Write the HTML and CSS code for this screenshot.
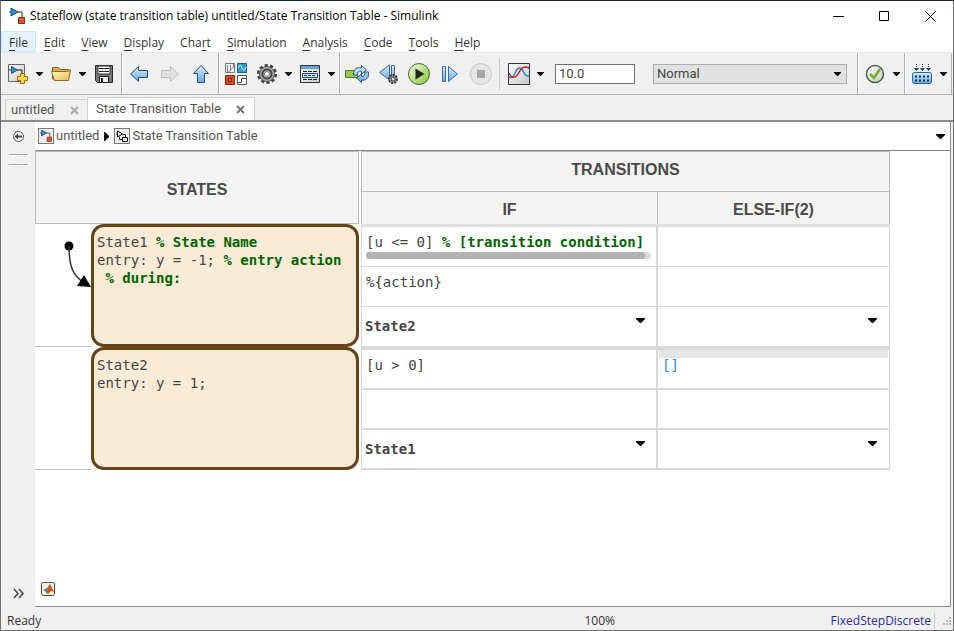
FILE: index.html
```html
<!DOCTYPE html>
<html lang="en">
<head>
	<meta charset="UTF-8">
	<title>Stateflow (state transition table) untitled/State Transition Table - Simulink</title>
	<link rel="stylesheet" href="styles.css">
</head>
<body>

<!-- shared icons -->
<svg class="defs" width="0" height="0" aria-hidden="true">
	<defs>
		<linearGradient id="blue" x1="0" y1="0" x2="0" y2="1"><stop offset="0" stop-color="#dcefff"/><stop offset="1" stop-color="#62a8dc"/></linearGradient>
		<linearGradient id="grey" x1="0" y1="0" x2="1" y2="1"><stop offset="0" stop-color="#fff"/><stop offset="1" stop-color="#c8c8c8"/></linearGradient>
		<linearGradient id="gold" x1="0" y1="0" x2="1" y2="1"><stop offset="0" stop-color="#fffbd0"/><stop offset="1" stop-color="#e8bc45"/></linearGradient>
		<linearGradient id="green" x1="0" y1="0" x2="1" y2="1"><stop offset="0" stop-color="#f4fce4"/><stop offset="1" stop-color="#7cc828"/></linearGradient>
	</defs>
	<symbol id="caret" viewBox="0 0 9 5"><path d="M0 0h9v1L5 5H4L0 1z"/></symbol>
	<symbol id="model" viewBox="0 0 16 16">
		<path d="M0 4h2M8 4h5v5" fill="none" stroke="#333"/>
		<path d="M2 0v8l7-4z" fill="#2f8fd0" stroke="#1c4f7c"/>
		<path d="M9.500 9.500h6v6h-6z" fill="#d9572b" stroke="#8d2b10"/>
	</symbol>
	<symbol id="close" viewBox="0 0 9 9"><path d="M1 1l7 7M8 1L1 8" fill="none" stroke="currentColor" stroke-width="2"/></symbol>
</svg>

<div class="window">
	<header class="titlebar">
		<svg width="16" height="16"><use href="#model"/></svg>
		<h1>Stateflow (state transition table) untitled/State Transition Table - Simulink</h1>
		<div class="controls">
			<button type="button" aria-label="Minimize"><svg width="11" height="11"><path d="M0 5.500h11" stroke="#000"/></svg></button>
			<button type="button" aria-label="Maximize"><svg width="11" height="11"><path d="M.5.5h9v9h-9z" fill="none" stroke="#000"/></svg></button>
			<button type="button" aria-label="Close"><svg width="11" height="11"><path d="M.5.5l10 10M10.500.5l-10 10" stroke="#000"/></svg></button>
		</div>
	</header>

	<nav class="menubar">
		<button type="button" class="active"><u>F</u>ile</button>
		<button type="button"><u>E</u>dit</button>
		<button type="button"><u>V</u>iew</button>
		<button type="button"><u>D</u>isplay</button>
		<button type="button">Cha<u>r</u>t</button>
		<button type="button"><u>S</u>imulation</button>
		<button type="button"><u>A</u>nalysis</button>
		<button type="button"><u>C</u>ode</button>
		<button type="button"><u>T</u>ools</button>
		<button type="button"><u>H</u>elp</button>
	</nav>

	<div class="toolbar">
		<div class="group">
			<button type="button" class="tool" aria-label="New model">
				<svg width="22" height="22" viewBox="0 0 22 22"><path d="M1.500 1.500h16v17h-16z" fill="url(#grey)" stroke="#666"/><path d="M2 7h2M10 7h5v3" fill="none" stroke="#222"/><path d="M4.500 3.500v7l6-3.500z" fill="#2f8fd0" stroke="#1c4f7c"/><path d="M13.500 10.500h4v3h3v4h-3v3h-4v-3h-3v-4h3z" fill="#fbd44a" stroke="#a36b00"/></svg>
			</button>
			<button type="button" class="drop" aria-label="New options"><svg width="7" height="4"><use href="#caret"/></svg></button>
			<button type="button" class="tool" aria-label="Open">
				<svg width="22" height="18" viewBox="0 0 22 18"><path d="M2.500 14V2.500h6l2 2h8V14z" fill="#d9ad4c" stroke="#866020"/><path d="M1.500 6.500h16l3-2-2 11h-14z" fill="url(#gold)" stroke="#946a22"/></svg>
			</button>
			<button type="button" class="drop" aria-label="Open options"><svg width="7" height="4"><use href="#caret"/></svg></button>
			<button type="button" class="tool" aria-label="Save">
				<svg width="20" height="20" viewBox="0 0 20 20"><path d="M1.500 1.500h17v17h-15l-2-2z" fill="#777" stroke="#2b2b2b"/><path d="M4 2h12v8H4z" fill="#fff" stroke="#333"/><path d="M5 4.500h10M5 7.500h10" stroke="#222"/><path d="M5.500 12.500h9v6h-9z" fill="#eee" stroke="#222"/><path d="M7 14h2v4H7z" fill="#222"/></svg>
			</button>
		</div>
		<div class="group">
			<button type="button" class="tool" aria-label="Back">
				<svg width="20" height="18" viewBox="0 0 20 18"><path d="M1.500 9L9.500 1.500v4h9v7h-9v4z" fill="url(#blue)" stroke="#2b4c70"/></svg>
			</button>
			<button type="button" class="tool" aria-label="Forward">
				<svg width="20" height="18" viewBox="0 0 20 18"><path d="M18.500 9L10.500 1.500v4h-9v7h9v4z" fill="#e0e0e0" stroke="#bcbcbc"/></svg>
			</button>
			<button type="button" class="tool" aria-label="Up">
				<svg width="18" height="20" viewBox="0 0 18 20"><path d="M9 1.500L1.500 9.500h4v9h7v-9h4z" fill="url(#blue)" stroke="#2b4c70"/></svg>
			</button>
		</div>
		<div class="group">
			<button type="button" class="tool" aria-label="Library browser">
				<svg width="22" height="22" viewBox="0 0 22 22"><path d="M.5.5h9v9h-9z" fill="#eee" stroke="#777"/><path d="M2.500 9V2M5.500 8V2M8.500 1v3l-5 5" fill="none" stroke="#888"/><path d="M12.500.5h9v9h-9z" fill="#2c9bd6" stroke="#17608c"/><path d="M13 5c2-4 3-3 4 0s3 3 4-1" fill="none" stroke="#fff"/><path d="M.5 12.500h9v9h-9z" fill="#d14a1c" stroke="#8d2b10"/><path d="M3.500 15.500h3v3h-3z" fill="#e87c4e" stroke="#7a1d08"/><path d="M12.500 12.500h9v9h-9z" fill="#fff" stroke="#555"/><path d="M13 19.500h3.500v-4H21" fill="none" stroke="#444"/></svg>
			</button>
			<button type="button" class="tool" aria-label="Configuration parameters">
				<svg width="20" height="20" viewBox="0 0 20 20"><circle cx="10" cy="10" r="8.500" fill="none" stroke="#444" stroke-width="3" stroke-dasharray="3.200 2.140"/><circle cx="10" cy="10" r="7.500" fill="#aaa" stroke="#555"/><circle cx="10" cy="10" r="4.500" fill="#d5d5d5" stroke="#444" stroke-width="2"/><circle cx="10" cy="10" r="2.500" fill="#f5f5f5" stroke="#777"/></svg>
			</button>
			<button type="button" class="drop" aria-label="Configuration options"><svg width="7" height="4"><use href="#caret"/></svg></button>
			<button type="button" class="tool" aria-label="Model explorer">
				<svg width="20" height="18" viewBox="0 0 20 18"><path d="M.5.5h19v17H.5z" fill="url(#grey)" stroke="#333"/><path d="M1 1h18v3H1z" fill="#65a0d6"/><path d="M3 6.500h14M3 14.500h14" stroke="#222" stroke-dasharray="4 1"/><path d="M2.500 8.500h15v4h-15z" fill="#cfe5fa" stroke="#1e4c80"/><path d="M4 10.500h12" stroke="#1e4c80" stroke-dasharray="3 1"/></svg>
			</button>
			<button type="button" class="drop" aria-label="Explorer options"><svg width="7" height="4"><use href="#caret"/></svg></button>
		</div>
		<div class="group grow">
			<button type="button" class="tool" aria-label="Update diagram">
				<svg width="24" height="20" viewBox="0 0 24 20"><path d="M.5 6.500h12v7H.5z" fill="#9bc94a" stroke="#4e7a18"/><path d="M8.500 11c-1-6 4-8 8-7V1.500l5 4.500-5 4V7.500c-3-1-4 1-4 3.500zM23.500 8c1 6-3 9-7 8v2.500L11.500 14l5-4v2.500c3 0 4-2 3-4.500z" fill="url(#blue)" stroke="#2a5884"/></svg>
			</button>
			<button type="button" class="tool" aria-label="Step back">
				<svg width="20" height="22" viewBox="0 0 20 22"><path d="M11.500 2v15L1.500 9.500zM13.500 2.500h3v14h-3z" fill="url(#blue)" stroke="#3b6c9a"/><circle cx="15" cy="16" r="4" fill="#aaa" stroke="#333" stroke-width="2" stroke-dasharray="2 1"/><circle cx="15" cy="16" r="2" fill="#eee" stroke="#333"/></svg>
			</button>
			<button type="button" class="tool" aria-label="Run">
				<svg width="24" height="24" viewBox="0 0 24 24"><circle cx="12" cy="12" r="10.500" fill="url(#green)" stroke="#4b633c"/><path d="M8.500 6.500v11l9-5.500z" fill="#222"/></svg>
			</button>
			<button type="button" class="tool" aria-label="Step forward">
				<svg width="18" height="18" viewBox="0 0 18 18"><path d="M1.500 1.500h3v15h-3zM7.500 1.500v15L16.500 9z" fill="url(#blue)" stroke="#3b6c9a"/></svg>
			</button>
			<button type="button" class="tool" aria-label="Stop" disabled>
				<svg width="24" height="24" viewBox="0 0 24 24"><circle cx="12" cy="12" r="10.500" fill="#e6e6e6" stroke="#c4c4c4"/><path d="M8 8h8v8H8z" fill="#a6a6a6"/></svg>
			</button>
			<span class="divider"></span>
			<button type="button" class="tool" aria-label="Scope">
				<svg width="22" height="22" viewBox="0 0 22 22"><path d="M.5.5h21v21H.5z" fill="url(#grey)" stroke="#333"/><path d="M1 14c4 2 5-2 7-6s5-4 7 0 3 5 6 5" fill="none" stroke="#2d7fc4" stroke-width="1.500"/><path d="M1 10c3 6 7 5 9 1s5-9 11-6" fill="none" stroke="#c7252c" stroke-width="1.500"/></svg>
			</button>
			<button type="button" class="drop" aria-label="Scope options"><svg width="7" height="4"><use href="#caret"/></svg></button>
			<input class="stop-time" type="text" value="10.0" aria-label="Stop time">
			<div class="picker mode">
				<select aria-label="Simulation mode"><option>Normal</option></select>
				<svg width="7" height="4"><use href="#caret"/></svg>
			</div>
		</div>
		<div class="group">
			<button type="button" class="tool" aria-label="Model advisor">
				<svg width="20" height="20" viewBox="0 0 20 20"><circle cx="10" cy="10" r="8.500" fill="url(#grey)" stroke="#4f5f42" stroke-width="1.500"/><path d="M5 10l4 4 6-9" fill="none" stroke="#6fae2a" stroke-width="2.500"/></svg>
			</button>
			<button type="button" class="drop" aria-label="Advisor options"><svg width="7" height="4"><use href="#caret"/></svg></button>
		</div>
		<div class="group">
			<button type="button" class="tool" aria-label="Build">
				<svg width="20" height="20" viewBox="0 0 20 20"><path d="M4.500 0v5M10.500 0v5M16.500 0v5" stroke="#153f6e" stroke-dasharray="1 1"/><path d="M2 4h5L4.500 7zM8 4h5l-2.500 3zM14 4h5l-2.500 3z" fill="#153f6e"/><rect x=".5" y="8.500" width="19" height="11" rx="2" fill="url(#blue)" stroke="#2463a0"/><path d="M3 12.500h14M3 16.500h14" stroke="#0d2f57" stroke-width="2" stroke-dasharray="2"/></svg>
			</button>
			<button type="button" class="drop" aria-label="Build options"><svg width="7" height="4"><use href="#caret"/></svg></button>
		</div>
	</div>

	<div class="tabs">
		<div class="tab"><a href="#">untitled</a><button type="button" aria-label="Close untitled"><svg width="9" height="9"><use href="#close"/></svg></button></div>
		<div class="tab current"><a href="#">State Transition Table</a><button type="button" aria-label="Close State Transition Table"><svg width="9" height="9"><use href="#close"/></svg></button></div>
	</div>

	<div class="workspace">
		<aside class="rail">
			<button type="button" aria-label="Hide browser">
				<svg width="11" height="11" viewBox="0 0 11 11"><circle cx="5.500" cy="5.500" r="5" fill="#fff" stroke="#555"/><path d="M1.500 5.500l3.500-3v2h4v2H5v2z" fill="#444"/></svg>
			</button>
			<hr><hr>
			<button type="button" class="expand" aria-label="Show more">
				<svg width="11" height="11" viewBox="0 0 11 11"><path d="M1 1l4 4.500L1 10M6 1l4 4.500L6 10" fill="none" stroke="#444" stroke-width="1.500"/></svg>
			</button>
		</aside>

		<main class="canvas">
			<nav class="breadcrumb">
				<span class="crumb-icon"><svg width="12" height="12"><use href="#model"/></svg></span>
				<a href="#">untitled</a>
				<svg class="next" width="5" height="9"><path d="M0 0h1l4 4v1L1 9H0z"/></svg>
				<span class="crumb-icon"><svg width="12" height="12" viewBox="0 0 12 12"><path d="M1.500 1v6l5-3zM7 4.500h2.500V7M6.500 7.500h5v4h-5zM0 4h1M6 9.500H3.500V7" fill="none" stroke="#000"/></svg></span>
				<a href="#">State Transition Table</a>
				<button type="button" class="history" aria-label="History"><svg width="9" height="5"><use href="#caret"/></svg></button>
			</nav>

			<div class="stt">
				<table class="states">
					<colgroup><col class="marker-col"><col></colgroup>
					<thead>
						<tr><th colspan="2">STATES</th></tr>
					</thead>
					<tbody>
						<tr>
							<td class="marker">
								<svg width="56" height="70" viewBox="0 0 56 70"><circle cx="34" cy="22" r="4.500"/><path d="M34 22c0 22 5 30 14 36" fill="none" stroke="#333" stroke-width="1.500"/><path d="M49 51l7 12-14-1z"/></svg>
							</td>
							<td><pre class="state">State1 <b>% State Name</b>
entry: y = -1; <b>% entry action</b>
 <b>% during:</b></pre></td>
						</tr>
						<tr>
							<td class="marker"></td>
							<td><pre class="state">State2
entry: y = 1;</pre></td>
						</tr>
					</tbody>
				</table>

				<table class="transitions">
					<colgroup><col class="if-col"><col></colgroup>
					<thead>
						<tr><th colspan="2">TRANSITIONS</th></tr>
						<tr><th class="branch">IF</th><th class="branch">ELSE-IF(2)</th></tr>
					</thead>
					<tbody>
						<tr class="first">
							<td><pre>[u &lt;= 0] <b>% [transition condition]</b></pre><div class="scroll"><span></span></div></td>
							<td></td>
						</tr>
						<tr>
							<td><pre>%{action}</pre></td>
							<td></td>
						</tr>
						<tr class="last">
							<td><div class="picker"><select aria-label="State1 if destination"><option>State2</option></select><svg width="9" height="5"><use href="#caret"/></svg></div></td>
							<td><div class="picker"><select aria-label="State1 else-if destination"><option></option></select><svg width="9" height="5"><use href="#caret"/></svg></div></td>
						</tr>
					</tbody>
					<tbody class="wide">
						<tr>
							<td><pre>[u &gt; 0]</pre></td>
							<td class="editing"><pre>[]</pre></td>
						</tr>
						<tr>
							<td></td>
							<td></td>
						</tr>
						<tr>
							<td><div class="picker"><select aria-label="State2 if destination"><option>State1</option></select><svg width="9" height="5"><use href="#caret"/></svg></div></td>
							<td><div class="picker"><select aria-label="State2 else-if destination"><option></option></select><svg width="9" height="5"><use href="#caret"/></svg></div></td>
						</tr>
					</tbody>
				</table>
			</div>

			<div class="language" title="MATLAB">
				<svg width="14" height="14" viewBox="0 0 14 14"><rect x=".5" y=".5" width="13" height="13" rx="2" fill="#fdf0c8" stroke="#2b4a78"/><path d="M2 8l4-2 3-4 1 5-4 5-2-3z" fill="#3f8fae"/><path d="M9 2l4 8-3-1-3 3-2-3c2-1 3-4 4-7z" fill="#d2501e"/></svg>
			</div>
		</main>
	</div>

	<footer class="statusbar">
		<span class="message">Ready</span>
		<span class="zoom">100%</span>
		<a class="solver" href="#">FixedStepDiscrete</a>
		<svg class="grip" width="8" height="8"><path d="M6 1h2M3 4h2M6 4h2M0 7h2M3 7h2M6 7h2" stroke="#b5b5b5" stroke-width="2"/></svg>
	</footer>
</div>

</body>
</html>
```
FILE: styles.css
```css
* {
	box-sizing: border-box;
	margin: 0;
	padding: 0;
}

body {
	font: 12px/16px "Open Sans", "Noto Sans", sans-serif;
	color: #333;
	background: #f0f0f0;
}

button {
	border: none;
	background: none;
	font: inherit;
	color: inherit;
}

a {
	color: inherit;
	text-decoration: none;
}

svg {
	display: block;
	flex: none;
}

.defs {
	position: absolute;
}

.window {
	display: flex;
	flex-direction: column;
	min-height: 100vh;
	border: 1px solid #707070;
	border-top-color: #1b2838;
}

/* title and menu */
.titlebar {
	display: flex;
	align-items: center;
	height: 30px;
	padding-left: 8px;
	gap: 5px;
	background: #fff;
	color: #000;
}

.titlebar h1 {
	font-size: 12px;
	font-weight: normal;
	white-space: nowrap;
}

.controls {
	display: flex;
	margin-left: auto;
}

.controls button {
	display: flex;
	align-items: center;
	justify-content: center;
	width: 46px;
	height: 30px;
}

.menubar {
	display: flex;
	height: 22px;
	background: #fff;
	border-bottom: 1px solid #e8e8e8;
}

.menubar button {
	height: 21px;
	padding: 3px 8px 0;
	white-space: nowrap;
}

.menubar u {
	text-underline-offset: 3px;
}

.menubar .active {
	padding: 2px 7px 0;
	background: #e5f3ff;
	border: 1px solid #cce8ff;
}

/* toolbar */
.toolbar {
	display: flex;
	height: 42px;
	padding-right: 1px;
	border-bottom: 1px solid #b5b5b5;
}

.group {
	display: flex;
	align-items: center;
	padding-right: 2px;
	border-left: 1px solid #fff;
	border-right: 1px solid #b0b0b0;
}

.grow {
	flex: 1;
}

.tool,
.drop {
	display: flex;
	align-items: center;
	justify-content: center;
	flex: none;
	width: 31px;
	height: 32px;
}

.drop {
	width: 12px;
}

.divider {
	width: 1px;
	height: 32px;
	margin: 0 3px;
	background: #c8c8c8;
}

.stop-time,
.mode select {
	height: 20px;
	padding: 0 3px;
	font: 13px/18px Roboto, sans-serif;
	color: #444;
}

.stop-time {
	width: 80px;
	margin: 0 18px 0 9px;
	border: 1px solid #707070;
	background: #fff;
}

.picker {
	position: relative;
}

.picker select {
	display: block;
	width: 100%;
	appearance: none;
	background: none;
	border: none;
}

.picker svg {
	position: absolute;
	top: 8px;
	right: 6px;
	pointer-events: none;
}

.mode {
	flex: 1;
	margin-right: 8px;
}

.mode select {
	background: #e1e1e1;
	border: 1px solid #adadad;
}

/* document tabs */
.tabs {
	display: flex;
	align-items: flex-end;
	height: 27px;
	padding-left: 4px;
	border-bottom: 2px solid #8a8a8f;
	font: 13px/18px Roboto, sans-serif;
	color: #555;
}

.tab {
	display: flex;
	align-items: center;
	justify-content: space-between;
	width: 82px;
	height: 21px;
	padding: 0 8px 0 5px;
	border: 1px solid #d0d0d0;
	border-right: none;
	border-bottom: none;
}

.tab button {
	color: #aaa;
}

.current {
	width: 168px;
	height: 23px;
	padding: 0 9px 0 8px;
	background: #fff;
	border-right: 1px solid #d0d0d0;
}

.current button {
	color: #777;
}

/* workspace */
.workspace {
	display: flex;
	flex: 1;
}

.rail {
	display: flex;
	flex-direction: column;
	align-items: center;
	width: 34px;
	padding: 9px 0 8px;
}

.rail hr {
	width: 19px;
	height: 2px;
	margin-bottom: 8px;
	border: none;
	border-top: 1px solid #aaa;
	border-bottom: 1px solid #fff;
}

.rail button {
	margin-bottom: 12px;
}

.rail .expand {
	margin: auto 0 0;
}

.canvas {
	display: flex;
	flex-direction: column;
	flex: 1;
	min-width: 0;
	margin-right: 2px;
	background: #fff;
	border-right: 1px solid #8a8a8f;
	border-bottom: 1px solid #8a8a8f;
}

.breadcrumb {
	display: flex;
	align-items: center;
	height: 29px;
	padding: 0 5px 0 3px;
	gap: 2px;
	border-bottom: 1px solid #85858f;
	font: 13px/18px Roboto, sans-serif;
	color: #555;
}

.crumb-icon {
	padding: 1px;
	background: #eee;
	border: 1px solid #777;
}

.next {
	margin: 0 3px;
}

.history {
	margin-left: auto;
}

/* state transition table */
.stt {
	display: flex;
	align-items: flex-start;
	gap: 2px;
}

table {
	table-layout: fixed;
	border-collapse: separate;
	border-spacing: 0;
}

th {
	background: #f4f4f4;
	border: 0 solid #bbb;
	font: bold 16px/20px "Liberation Sans", Arial, sans-serif;
	color: #4a4a4a;
}

td {
	vertical-align: top;
}

pre,
td select {
	font: 14px/18px "DejaVu Sans Mono", "Liberation Mono", monospace;
	color: #444;
}

pre b {
	color: #006400;
}

.states {
	width: 324px;
}

.marker-col {
	width: 56px;
}

.if-col {
	width: 297px;
}

.states th {
	height: 73px;
	padding-top: 4px;
	border-width: 1px;
}

.marker {
	border-bottom: 1px solid #bbb;
}

.state {
	height: 123px;
	padding: 6px 3px;
	background: #faebd7;
	border: 3px solid #634416;
	border-radius: 13px;
}

.transitions {
	width: 529px;
}

.transitions th {
	height: 41px;
	border-width: 1px;
	border-left-width: 0;
	padding-bottom: 4px;
}

.transitions th:first-child {
	border-left-width: 1px;
}

.transitions .branch {
	height: 32px;
	padding: 3px 0 0;
	border-top: none;
	border-bottom: none;
}

.transitions td {
	height: 40px;
	padding: 6px 5px 0;
	border-right: 1px solid #d8d8d8;
	border-bottom: 1px solid #d8d8d8;
}

.transitions td:first-child {
	padding-left: 4px;
	border-left: 1px solid #d8d8d8;
	border-right-width: 2px;
}

.transitions .first td {
	height: 43px;
	border-top: 3px solid #dedede;
}

.transitions .last td {
	height: 43px;
	border-bottom-width: 4px;
}

.transitions .wide td {
	border-bottom-width: 2px;
}

.transitions pre {
	overflow: hidden;
}

.transitions .editing {
	padding: 0 1px;
}

.editing pre {
	padding: 0 3px;
	border-top: 8px solid #e5e5e5;
	line-height: 14px;
	color: #1a8fe0;
}

.scroll {
	height: 7px;
	margin-top: 1px;
	border-radius: 3px;
	background: #ddd;
}

.scroll span {
	display: block;
	width: 98%;
	height: 7px;
	border-radius: 3px;
	background: #b3b3b3;
}

td select {
	height: 26px;
	font-weight: bold;
}

td .picker {
	margin-left: -1px;
}

td .picker svg {
	top: 5px;
}

.transitions td:last-child .picker svg {
	right: 7px;
}

.language {
	margin: auto 0 10px 6px;
}

/* status bar */
.statusbar {
	display: flex;
	align-items: center;
	height: 23px;
	padding: 4px 2px 0 6px;
}

.message {
	flex: 5;
}

.zoom {
	flex: 1;
}

.solver {
	flex: 2;
	padding-right: 3px;
	border-right: 1px solid #ccc;
	text-align: right;
	color: #2b2b9b;
}

.grip {
	margin-left: 8px;
}
```
